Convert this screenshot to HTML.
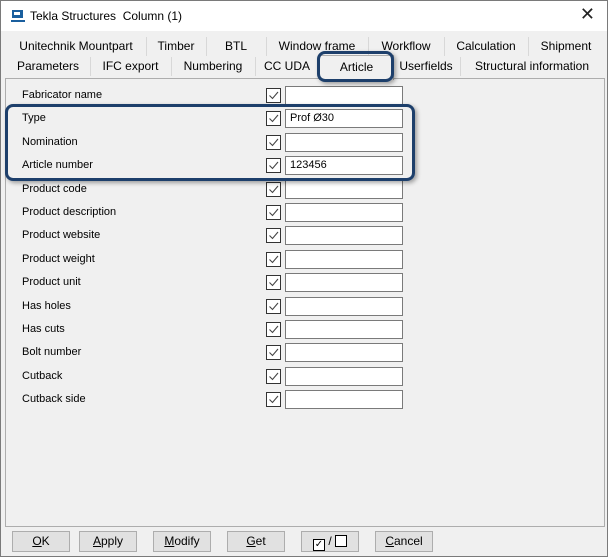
<!DOCTYPE html>
<html><head><style>
body{margin:0;width:608px;height:557px;background:#f0f0f0;font-family:"Liberation Sans",sans-serif;font-size:12px;color:#000;position:relative;overflow:hidden}
.win{position:absolute;left:0;top:0;width:606px;height:555px;border:1px solid #7a7a7a;background:#f0f0f0}
.title{position:absolute;left:0;top:0;width:606px;height:30px;background:#fff}
.title span{position:absolute;left:29px;top:8px;font-size:12px}
.x{position:absolute;right:12px;top:3px;font-size:18px;font-weight:100;color:#222}
.tab{position:absolute;height:19px;line-height:19px;text-align:center;border-right:1px solid #d8d8d8;font-size:12px}
.panel{position:absolute;left:4px;top:77px;width:598px;height:447px;border:1px solid #adadad;background:#f0f0f0}
.lbl{position:absolute;left:21px;font-size:11px}
.cb{position:absolute;left:265px;width:13px;height:13px;border:1px solid #333;background:#fff}
.cb svg{position:absolute;left:1px;top:1px}
.in{position:absolute;left:284px;border:1px solid #7a7a7a;background:#fff;font-size:11px;line-height:17px;padding-left:4px;box-sizing:border-box;width:118px;height:19px}
.btn{position:absolute;top:530px;width:56px;height:19px;border:1px solid #adadad;background:#e1e1e1;text-align:center;line-height:18px;font-size:12px}
.hl{position:absolute;border:3px solid #1d3f6b;border-radius:8px;box-shadow:2px 2px 4px rgba(0,0,0,.35)}
</style></head><body>
<div class="win">
<div class="title"><svg style="position:absolute;left:10px;top:9px" width="14" height="13"><rect x="1" y="0" width="11" height="8" fill="#1a5f9e"/><rect x="0" y="10" width="14" height="2" fill="#1a5f9e"/><rect x="3" y="2" width="6" height="3" fill="#fff"/></svg><span>Tekla Structures &nbsp;Column (1)</span><div class="x">✕</div></div>
<div class="tab" style="left:5px;top:36px;width:140px">Unitechnik Mountpart</div>
<div class="tab" style="left:145px;top:36px;width:60px">Timber</div>
<div class="tab" style="left:205px;top:36px;width:60px">BTL</div>
<div class="tab" style="left:265px;top:36px;width:102px">Window frame</div>
<div class="tab" style="left:367px;top:36px;width:76px">Workflow</div>
<div class="tab" style="left:443px;top:36px;width:84px">Calculation</div>
<div class="tab" style="left:527px;top:36px;width:76px;border:0">Shipment</div>
<div class="tab" style="left:5px;top:56px;width:84px">Parameters</div>
<div class="tab" style="left:89px;top:56px;width:81px">IFC export</div>
<div class="tab" style="left:170px;top:56px;width:84px">Numbering</div>
<div class="tab" style="left:254px;top:56px;width:64px">CC UDA</div>
<div class="tab" style="left:318px;top:54px;width:73px;height:24px;line-height:22px;background:#f0f0f0;z-index:2;border:1px solid #adadad;border-bottom:0">Article</div>
<div class="tab" style="left:391px;top:56px;width:68px">Userfields</div>
<div class="tab" style="left:459px;top:56px;width:144px;border:0">Structural information</div>
<div class="panel"></div>
<div id="rows"></div>
<div class="btn" style="left:11px"><u>O</u>K</div>
<div class="btn" style="left:78px"><u>A</u>pply</div>
<div class="btn" style="left:152px"><u>M</u>odify</div>
<div class="btn" style="left:226px"><u>G</u>et</div>
<div class="btn" style="left:300px"><span style="display:inline-block;width:10px;height:10px;border:1px solid #000;background:#fff;vertical-align:-2px;font-size:10px;line-height:10px">✓</span> / <span style="display:inline-block;width:10px;height:10px;border:1px solid #000;background:#fff;vertical-align:-2px"></span></div>
<div class="btn" style="left:374px"><u>C</u>ancel</div>
<div class="hl" style="left:316px;top:50px;width:71px;height:25px;z-index:3"></div>
<div class="hl" style="left:4px;top:103px;width:404px;height:71px"></div>
</div>
<script>
var L=["Fabricator name","Type","Nomination","Article number","Product code","Product description","Product website","Product weight","Product unit","Has holes","Has cuts","Bolt number","Cutback","Cutback side"];
var V={1:"Prof Ø30",3:"123456"};var h="";
L.forEach(function(t,i){var y=Math.round(85+i*23.4);
h+='<div class="lbl" style="top:'+(y+3)+'px">'+t+'</div><div class="cb" style="top:'+(y+2)+'px"><svg width="11" height="11"><path d="M1.5 5.5L4.5 8.5L10 2" stroke="#444" fill="none" stroke-width="1.1"/></svg></div><div class="in" style="top:'+y+'px">'+(V[i]||"")+'</div>';});
document.getElementById("rows").innerHTML=h;
</script>
</body></html>
